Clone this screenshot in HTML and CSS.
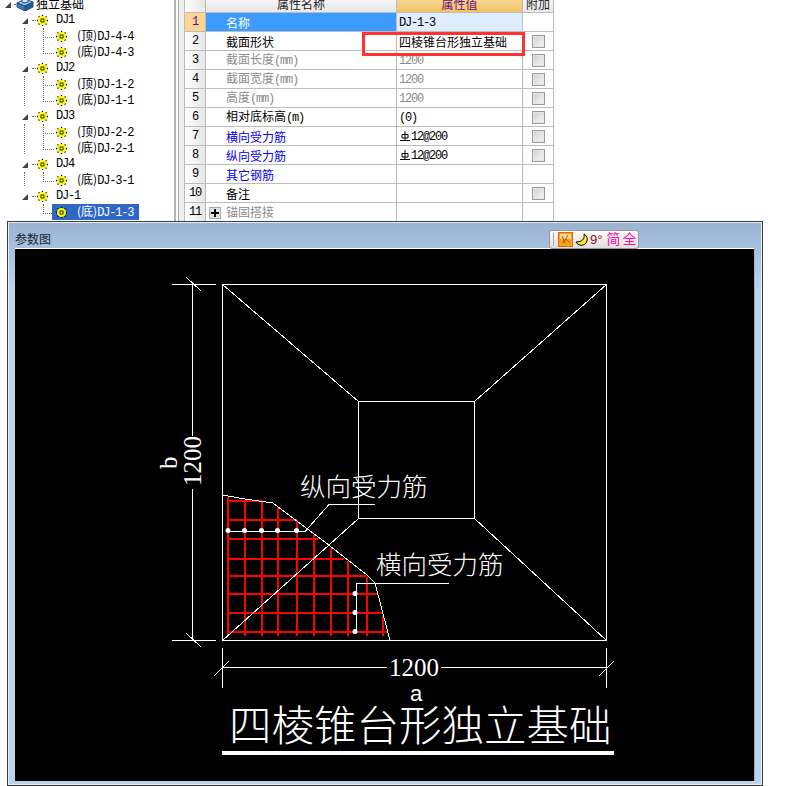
FILE: index.html
```html
<!DOCTYPE html>
<html lang="zh">
<head>
<meta charset="utf-8">
<title>参数图</title>
<link rel="stylesheet" href="styles.css">
</head>
<body>
<svg class="defs" width="0" height="0" aria-hidden="true">
  <symbol id="gear" viewBox="0 0 11 11">
    <path d="M5.500 0V11M0 5.500H11M1.500 1.500L9.500 9.500M9.500 1.500L1.500 9.500" stroke="#000" stroke-width="1.300"/>
    <circle cx="5.500" cy="5.500" r="4.500" fill="#ffff00"/>
    <rect x="4" y="4" width="3" height="3" fill="#ffff00" stroke="#000" stroke-width=".8"/>
  </symbol>
  <symbol id="rebar" viewBox="0 0 12 12">
    <path d="M6 1V10M3 4.500H9V8H3ZM1 10.500H11" fill="none" stroke="#000" stroke-width="1"/>
  </symbol>
</svg>

<section class="top">
  <div class="tree">
    <div class="row root">
      <i class="tog"></i><i class="dash"></i>
      <svg class="rooticon" width="18" height="14" viewBox="0 0 18 14">
        <path d="M1 6L9 2L17 5L9 9Z" fill="#9cc4ec" stroke="#23507f"/>
        <path d="M1 6V10L9 14V9Z" fill="#3f78b4" stroke="#23507f"/>
        <path d="M17 5V10L9 14V9Z" fill="#1f5d9b" stroke="#23507f"/>
        <path d="M6 1H12V5L9 6L6 5Z" fill="#d6e6f6" stroke="#23507f"/>
      </svg>
      <span class="label">独立基础</span>
    </div>

    <div class="group">
      <div class="row l1"><i class="tog"></i><i class="dash"></i><svg class="ico"><use href="#gear"/></svg><span class="label lat">DJ1</span></div>
      <div class="row l2"><span class="node"><svg class="ico"><use href="#gear"/></svg><span class="label">(顶)<b class="lat">DJ-4-4</b></span></span></div>
      <div class="row l2"><span class="node"><svg class="ico"><use href="#gear"/></svg><span class="label">(底)<b class="lat">DJ-4-3</b></span></span></div>
    </div>
    <div class="group">
      <div class="row l1"><i class="tog"></i><i class="dash"></i><svg class="ico"><use href="#gear"/></svg><span class="label lat">DJ2</span></div>
      <div class="row l2"><span class="node"><svg class="ico"><use href="#gear"/></svg><span class="label">(顶)<b class="lat">DJ-1-2</b></span></span></div>
      <div class="row l2"><span class="node"><svg class="ico"><use href="#gear"/></svg><span class="label">(底)<b class="lat">DJ-1-1</b></span></span></div>
    </div>
    <div class="group">
      <div class="row l1"><i class="tog"></i><i class="dash"></i><svg class="ico"><use href="#gear"/></svg><span class="label lat">DJ3</span></div>
      <div class="row l2"><span class="node"><svg class="ico"><use href="#gear"/></svg><span class="label">(顶)<b class="lat">DJ-2-2</b></span></span></div>
      <div class="row l2"><span class="node"><svg class="ico"><use href="#gear"/></svg><span class="label">(底)<b class="lat">DJ-2-1</b></span></span></div>
    </div>
    <div class="group">
      <div class="row l1"><i class="tog"></i><i class="dash"></i><svg class="ico"><use href="#gear"/></svg><span class="label lat">DJ4</span></div>
      <div class="row l2"><span class="node"><svg class="ico"><use href="#gear"/></svg><span class="label">(底)<b class="lat">DJ-3-1</b></span></span></div>
    </div>
    <div class="group last">
      <div class="row l1"><i class="tog"></i><i class="dash"></i><svg class="ico"><use href="#gear"/></svg><span class="label lat">DJ-1</span></div>
      <div class="row l2"><span class="node sel"><svg class="ico"><use href="#gear"/></svg><span class="label">(底)<b class="lat">DJ-1-3</b></span></span></div>
    </div>
  </div>

  <div class="splitter"></div>

  <div class="gridwrap">
    <table class="grid">
      <colgroup><col class="c0"><col class="c1"><col class="c2"><col class="c3"></colgroup>
      <thead>
        <tr><th class="num"></th><th>属性名称</th><th class="hot">属性值</th><th>附加</th></tr>
      </thead>
      <tbody>
        <tr class="active"><td class="num">1</td><td class="name">名称</td><td class="val"><b class="lat">DJ-1-3</b></td><td></td></tr>
        <tr><td class="num">2</td><td class="name">截面形状</td><td class="val">四棱锥台形独立基础</td><td><i class="check"></i></td></tr>
        <tr class="dim"><td class="num">3</td><td class="name">截面长度<b class="lat">(mm)</b></td><td class="val"><b class="lat">1200</b></td><td><i class="check"></i></td></tr>
        <tr class="dim"><td class="num">4</td><td class="name">截面宽度<b class="lat">(mm)</b></td><td class="val"><b class="lat">1200</b></td><td><i class="check"></i></td></tr>
        <tr class="dim"><td class="num">5</td><td class="name">高度<b class="lat">(mm)</b></td><td class="val"><b class="lat">1200</b></td><td><i class="check"></i></td></tr>
        <tr><td class="num">6</td><td class="name">相对底标高<b class="lat">(m)</b></td><td class="val"><b class="lat">(0)</b></td><td><i class="check"></i></td></tr>
        <tr><td class="num">7</td><td class="name link">横向受力筋</td><td class="val"><svg class="rebar"><use href="#rebar"/></svg><b class="lat">12@200</b></td><td><i class="check"></i></td></tr>
        <tr><td class="num">8</td><td class="name link">纵向受力筋</td><td class="val"><svg class="rebar"><use href="#rebar"/></svg><b class="lat">12@200</b></td><td><i class="check"></i></td></tr>
        <tr><td class="num">9</td><td class="name link">其它钢筋</td><td class="val"></td><td></td></tr>
        <tr><td class="num">10</td><td class="name">备注</td><td class="val"></td><td><i class="check"></i></td></tr>
        <tr class="dim"><td class="num">11</td><td class="name plusname"><i class="plus"></i>锚固搭接</td><td class="val"></td><td></td></tr>
      </tbody>
    </table>
    <div class="redbox"></div>
  </div>
</section>

<section class="panel">
  <header class="phead">
    <span class="ptitle">参数图</span>
    <div class="tools">
      <i class="sep"></i>
      <svg class="tico" width="15" height="15" viewBox="0 0 15 15">
        <rect x=".5" y=".5" width="14" height="14" fill="#f6a21e" stroke="#e8641c"/>
        <rect x="2" y="2" width="11" height="5" fill="#ffd98a"/>
        <path d="M4 4L7 11M10 3L5 11M8 7L12 11" stroke="#b0501a" stroke-width="1" fill="none"/>
      </svg>
      <svg class="tico" width="13" height="14" viewBox="0 0 13 14">
        <path d="M9 1C10 6 7 9 1 9C3 13 10 14 12 8C13 5 11 2 9 1Z" fill="#ffe81e" stroke="#000"/>
      </svg>
      <span class="deg">9°</span>
      <span class="pink">简</span><span class="pink">全</span>
    </div>
  </header>
  <div class="canvas">
    <svg class="cad" width="739" height="532" viewBox="15 249 739 532">
      <g class="thin">
        <rect x="222.500" y="284.500" width="384" height="356"/>
        <rect x="358.500" y="401.500" width="116" height="117"/>
        <path d="M222.500 284.500L358.500 401.500M606.500 284.500L474.500 401.500M606.500 640.500L474.500 518.500"/>
      </g>
      <g class="red">
        <path d="M227.500 497V636M244.500 500V636M262 501V636M278 507V636M297 520V636M314 535V636M331 548V636M348 561V636M367 577V636M383 615V636"/>
        <path d="M227 501H262M227 520H297M227 538.500H318M227 558.500H344M227 575.500H366M227 594H378M227 613H383M227 632H388"/>
      </g>
      <g class="thin">
        <path d="M222.500 640.500L358.500 518.500"/>
        <path d="M222.500 495L245 499L273 503L297 521L330 546L367 575L375 583L390 640.500"/>
        <path d="M228 531.500H305L329 504.500H375"/>
        <path d="M448.500 583.500H356.500V632"/>
        <path d="M172 284.500H216M172 640.500H216M192.500 284V436M192.500 489V640M186 277L201 291M186 633L201 647"/>
        <path d="M222.500 648V688M606.500 648V688M222 667.500H387M441 667.500H607M214 676L229 661M599 676L614 661"/>
      </g>
      <g class="dots">
        <circle cx="228" cy="530.500" r="2.500"/><circle cx="244.500" cy="530.500" r="2.500"/><circle cx="261.500" cy="530.500" r="2.500"/><circle cx="277.500" cy="530.500" r="2.500"/><circle cx="296.500" cy="530.500" r="2.500"/>
        <circle cx="355" cy="593.500" r="2.500"/><circle cx="355" cy="612.500" r="2.500"/><circle cx="355" cy="631.500" r="2.500"/>
      </g>
      <text class="serif big" transform="translate(201 486) rotate(-90)">1200</text>
      <text class="serif big" transform="translate(177 469) rotate(-90)">b</text>
      <text class="serif big" x="389" y="676">1200</text>
      <text class="sans small" x="410" y="701">a</text>
      <text class="cjk callout" x="300" y="496">纵向受力筋</text>
      <text class="cjk callout" x="376" y="574">横向受力筋</text>
      <text class="cjk headline" x="229" y="741">四棱锥台形独立基础</text>
      <rect class="underline" x="222" y="751" width="392" height="4"/>
    </svg>
  </div>
</section>
</body>
</html>
```

FILE: styles.css
```css
* { box-sizing: border-box; }
html, body { margin: 0; padding: 0; }
body {
  width: 798px;
  height: 786px;
  overflow: hidden;
  background: #fff;
  color: #000;
  font: 12px/16px "Noto Sans CJK SC", "Liberation Sans", sans-serif;
}
.defs { position: absolute; }
.lat {
  font-family: "Liberation Mono", "Noto Sans CJK SC", monospace;
  font-size: 12px;
  font-weight: 400;
  letter-spacing: -1.2px;
}

/* top area */
.top { display: flex; height: 221px; overflow: hidden; }

/* tree */
.tree {
  width: 176px;
  flex: none;
  margin-top: -4px;
  border-right: 2px solid #b4b4b4;
}
.row { position: relative; display: flex; align-items: center; height: 16px; white-space: nowrap; }
.tog {
  width: 0; height: 0; flex: none;
  border-style: solid;
  border-width: 0 0 6px 6px;
  border-color: transparent transparent #444 transparent;
  margin-top: 2px;
}
.dash { width: 6px; height: 0; flex: none; border-top: 1px dotted #666; }
.root { padding-left: 5px; }
.root .dash { margin: 0 -2px 0 3px; width: 4px; }
.root .rooticon { flex: none; margin-right: 2px; }
.l1 { padding-left: 22px; }
.l1 .dash { margin-left: 4px; margin-right: -1px; }
.ico { width: 11px; height: 11px; flex: none; }
.l1 .label { margin-left: 8px; }
.l2 { padding-left: 52px; }
.node { display: flex; align-items: center; height: 16px; padding: 0 4px; width: 87px; }
.node .label { margin-left: 10px; }
.sel { background: #2f68c4; color: #fff; }
.group { position: relative; }
.group::before {
  content: "";
  position: absolute;
  left: 24px;
  top: 16px;
  bottom: 2px;
  border-left: 1px dotted #666;
}
.group.last::before { display: none; }
.l2::before {
  content: "";
  position: absolute;
  left: 43px;
  top: 0;
  width: 10px;
  height: 9px;
  border-left: 1px dotted #666;
  border-bottom: 1px dotted #666;
}
.l2 + .l2::before { top: -7px; height: 16px; }

.splitter {
  width: 8px;
  flex: none;
  background: linear-gradient(90deg, #fff 0 2px, #aaa 2px 3px, #f0f0f0 3px);
}

/* property grid */
.gridwrap { position: relative; flex: none; width: 370px; }
.grid {
  margin-top: -6px;
  table-layout: fixed;
  width: 370px;
  border-collapse: separate;
  border-spacing: 0;
}
.c0 { width: 22px; }
.c1 { width: 191px; }
.c2 { width: 126px; }
.c3 { width: 31px; }
.grid th, .grid td {
  height: 19px;
  padding: 0;
  border-right: 1px solid #bcbcbc;
  border-bottom: 1px solid #bcbcbc;
  font-weight: 400;
  line-height: 13px;
  white-space: nowrap;
  overflow: hidden;
  text-align: center;
  vertical-align: middle;
}
.grid th { background: linear-gradient(#fbfbfb, #e8e8e8); color: #222; }
.grid th.hot { background: linear-gradient(#fbe0a4, #f2c264); color: #6c0f7c; }
.grid .num {
  border-left: 1px solid #bcbcbc;
  background: linear-gradient(90deg, #ffffff, #e6e6e6);
  font-family: "Liberation Mono", monospace;
  font-size: 12px;
  letter-spacing: -1.2px;
}
.grid td.name { text-align: left; padding-left: 20px; }
.grid td.val { text-align: left; padding-left: 2px; }
.active .num { background: #fdd593; color: #6c0f7c; }
.active .name { background: #3d9bff; color: #fff; }
.active .val { background: #deeeff; }
.dim td.name, .dim td.val { color: #8c8c8c; }
.link { color: #0000f0; }
.grid td.plusname { padding-left: 3px; }
.plus {
  position: relative;
  display: inline-block;
  width: 12px; height: 12px;
  margin-right: 5px;
  vertical-align: -2px;
  border: 1px solid #a8a8a8;
  background: #e0e0e0;
}
.plus::before, .plus::after { content: ""; position: absolute; background: #000; }
.plus::before { left: 1px; right: 1px; top: 4px; height: 2px; }
.plus::after { top: 1px; bottom: 1px; left: 4px; width: 2px; }
.check {
  display: block;
  width: 13px; height: 13px;
  margin: 0 auto;
  border: 1px solid #9a9a9a;
  background: linear-gradient(135deg, #d0d0d0, #f6f6f6);
  box-shadow: inset 0 0 0 1px #e6e6e6;
}
.rebar { width: 12px; height: 12px; vertical-align: -2px; }
.redbox {
  position: absolute;
  left: 178px;
  top: 32px;
  width: 163px;
  height: 24px;
  border: 3px solid #f33;
}

/* parameter panel */
.panel {
  margin-left: 7px;
  width: 756px;
  height: 565px;
  border: 1px solid #3c3c3c;
  box-shadow: inset 0 0 0 1px #e8eef6;
  background: linear-gradient(#99b4d2, #bcd3ee 12%, #bcd3ee);
  padding: 1px 7px 0 7px;
}
.phead { display: flex; align-items: flex-end; height: 26px; }
.ptitle { color: #1c2430; line-height: 22px; height: 21px; }
.tools {
  display: flex;
  align-items: center;
  gap: 2px;
  height: 19px;
  width: 90px;
  margin-left: 498px;
  padding-left: 3px;
  border: 1px solid #9a9a9a;
  border-radius: 3px;
  background: linear-gradient(#fdfdfd, #dedede);
  overflow: hidden;
}
.sep { width: 1px; height: 13px; background: #aaa; margin-right: 2px; }
.tico { flex: none; }
.deg { color: #8a0a20; font: 13px/16px "Liberation Sans", sans-serif; letter-spacing: 0; margin-right: 2px; }
.pink { color: #ff0aa0; font-size: 14px; line-height: 16px; margin-top: -3px; }
.canvas { width: 739px; height: 532px; background: #000; box-shadow: 0 -1px 0 #fff, 1px 0 0 #aab; }
.cad { display: block; }

/* CAD drawing */
.thin { fill: none; stroke: #fff; stroke-width: 1; shape-rendering: crispEdges; }
.red { fill: none; stroke: #f00; stroke-width: 2; shape-rendering: crispEdges; }
.dots { fill: #fff; }
.underline { fill: #fff; }
.cad text { fill: #fff; }
.serif { font-family: "Liberation Serif", serif; }
.sans { font-family: "Liberation Sans", sans-serif; }
.big { font-size: 25px; }
.small { font-size: 22px; }
.cjk { font-family: "Noto Sans CJK SC", sans-serif; font-weight: 300; }
.callout { font-size: 25.500px; }
.headline { font-size: 42.500px; }
```
